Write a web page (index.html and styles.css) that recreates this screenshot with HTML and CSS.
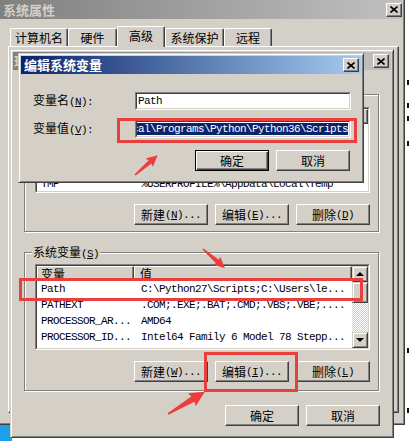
FILE: index.html
```html
<!DOCTYPE html>
<html lang="zh-CN">
<head>
    <meta charset="UTF-8">
    <meta name="viewport" content="width=device-width, initial-scale=1.0">
    <title>系统属性 - 编辑系统变量</title>
    <link rel="stylesheet" href="styles.css">
</head>
<body>
    <div class="desktop">
        <div class="desk-corner"></div>
        <div class="desk-marks"><i></i><i></i><i></i><i></i><i></i><i></i></div>

        <!-- 系统属性 -->
        <div class="window sysprop">
            <div class="caption inactive">
                <span class="caption-text">系统属性</span>
                <span class="close-btn"><svg width="8" height="7" viewBox="0 0 8 7"><path d="M0.5 0.5L7.5 6.5M7.5 0.5L0.5 6.5"/></svg></span>
            </div>
            <div class="tabs">
                <span class="tab tab-name">计算机名</span>
                <span class="tab tab-hw">硬件</span>
                <span class="tab tab-adv active">高级</span>
                <span class="tab tab-prot">系统保护</span>
                <span class="tab tab-remote">远程</span>
            </div>
            <div class="tab-panel"></div>
        </div>

        <!-- 环境变量 -->
        <div class="window envvars">
            <div class="caption inactive">
                <span class="caption-text">环境变量</span>
                <span class="close-btn"><svg width="8" height="7" viewBox="0 0 8 7"><path d="M0.5 0.5L7.5 6.5M7.5 0.5L0.5 6.5"/></svg></span>
            </div>

            <div class="group user-group">
                <span class="legend">用户变量<span class="a">(<u>U</u>)</span></span>
                <div class="lv-frame">
                    <div class="listview">
                        <div class="lv-main">
                            <div class="lv-head"><span class="col-name">变量</span><span class="col-value">值</span></div>
                            <div class="lv-rows user-rows">
                                <div class="lv-row"><span class="col-name">PATH</span><span class="col-value">%USERPROFILE%\AppData\Local\Micr...</span></div>
                                <div class="lv-row"><span class="col-name">TEMP</span><span class="col-value">%USERPROFILE%\AppData\Local\Temp</span></div>
                                <div class="lv-row"><span class="col-name">Tmp</span><span class="col-value">%USERPROFILE%\AppData\Local\Temp</span></div>
                                <div class="lv-row"><span class="col-name">TMP</span><span class="col-value">%USERPROFILE%\AppData\Local\Temp</span></div>
                            </div>
                        </div>
                    </div>
                </div>
                <div class="btn-row">
                    <button class="btn">新建<span class="a">(<u>N</u>)...</span></button>
                    <button class="btn">编辑<span class="a">(<u>E</u>)...</span></button>
                    <button class="btn">删除<span class="a">(<u>D</u>)</span></button>
                </div>
            </div>

            <div class="group sys-group">
                <span class="legend">系统变量<span class="a">(<u>S</u>)</span></span>
                <div class="lv-frame">
                    <div class="listview">
                        <div class="lv-main">
                            <div class="lv-head"><span class="col-name">变量</span><span class="col-value">值</span></div>
                            <div class="lv-rows">
                                <div class="lv-row"><span class="col-name">Path</span><span class="col-value">C:\Python27\Scripts;C:\Users\le...</span></div>
                                <div class="lv-row"><span class="col-name">PATHEXT</span><span class="col-value">.COM;.EXE;.BAT;.CMD;.VBS;.VBE;....</span></div>
                                <div class="lv-row"><span class="col-name">PROCESSOR_AR...</span><span class="col-value">AMD64</span></div>
                                <div class="lv-row"><span class="col-name">PROCESSOR_ID...</span><span class="col-value">Intel64 Family 6 Model 78 Stepp...</span></div>
                            </div>
                        </div>
                        <div class="vscroll">
                            <span class="sb-btn"><i class="arrow-up"></i></span>
                            <span class="sb-thumb"></span>
                            <span class="sb-track"></span>
                            <span class="sb-btn"><i class="arrow-down"></i></span>
                        </div>
                    </div>
                </div>
                <div class="btn-row">
                    <button class="btn">新建<span class="a">(<u>W</u>)...</span></button>
                    <button class="btn">编辑<span class="a">(<u>I</u>)...</span></button>
                    <button class="btn">删除<span class="a">(<u>L</u>)</span></button>
                </div>
            </div>

            <div class="dlg-buttons">
                <button class="btn">确定</button>
                <button class="btn">取消</button>
            </div>
        </div>

        <!-- 编辑系统变量 -->
        <div class="window editvar">
            <div class="caption active">
                <span class="caption-text">编辑系统变量</span>
                <span class="close-btn"><svg width="8" height="7" viewBox="0 0 8 7"><path d="M0.5 0.5L7.5 6.5M7.5 0.5L0.5 6.5"/></svg></span>
            </div>
            <div class="edit-body">
                <div class="field-row">
                    <span class="field-label">变量名<span class="a">(<u>N</u>):</span></span>
                    <div class="textbox"><div class="textbox-inner"><span class="tb-text">Path</span></div></div>
                </div>
                <div class="field-row">
                    <span class="field-label">变量值<span class="a">(<u>V</u>):</span></span>
                    <div class="textbox"><div class="textbox-inner scrolled"><span class="tb-text selected">cal\Programs\Python\Python36\Scripts</span></div></div>
                </div>
                <div class="edit-buttons">
                    <button class="btn default">确定</button>
                    <button class="btn">取消</button>
                </div>
            </div>
        </div>

        <!-- 标注 -->
        <svg class="marks" width="409" height="441" viewBox="0 0 409 441">
            <rect x="118.5" y="119.5" width="237" height="22"/>
            <rect x="20.5" y="279.5" width="341" height="20"/>
            <rect x="205.5" y="353.5" width="91" height="37"/>
            <polygon transform="translate(135 175) rotate(-41)" points="0,-0.8 20,-2.2 19,-5.5 30,0 19,5.5 20,2.2 0,0.8"/>
            <polygon transform="translate(203 249) rotate(41)" points="0,-0.8 19,-2.2 18,-5.5 29,0 18,5.5 19,2.2 0,0.8"/>
            <polygon transform="translate(168 414) rotate(-31)" points="0,-1 29,-3 28,-7.5 43,0 28,7.5 29,3 0,1"/>
        </svg>
    </div>
</body>
</html>
```

FILE: styles.css
```css
* {
    box-sizing: border-box;
}
body {
    margin: 0;
    background-color: #fff;
    font-family: "Noto Sans CJK SC", sans-serif;
    font-size: 12px;
    line-height: 14px;
    color: #000;
    overflow: hidden;
}
.desktop {
    position: relative;
    width: 409px;
    height: 441px;
    overflow: hidden;
}
.desk-corner {
    position: absolute;
    left: 0;
    top: 424px;
    width: 12px;
    height: 17px;
    background-color: #1ea0e6;
}
.desk-marks {
    position: absolute;
    left: 405px;
    top: 0;
    width: 4px;
    height: 441px;
}
.desk-marks i {
    position: absolute;
    left: 2px;
    width: 2px;
    height: 5px;
    background-color: #111;
}
.desk-marks i:nth-child(1) { top: 80px; }
.desk-marks i:nth-child(2) { top: 103px; }
.desk-marks i:nth-child(3) { top: 116px; }
.desk-marks i:nth-child(4) { top: 141px; }
.desk-marks i:nth-child(5) { top: 348px; }
.desk-marks i:nth-child(6) { top: 408px; }

/* classic window frame */
.window {
    position: absolute;
    display: flex;
    flex-direction: column;
    background-color: #d4d0c8;
    border: 1px solid;
    border-color: #d4d0c8 #404040 #404040 #d4d0c8;
    box-shadow: inset 1px 1px #fff, inset -1px -1px #808080;
    padding: 2px;
}
.caption {
    display: flex;
    align-items: center;
    justify-content: space-between;
    flex-shrink: 0;
    height: 18px;
    padding: 0 2px 0 3px;
    font-size: 13px;
    font-weight: bold;
    white-space: nowrap;
}
.caption.active {
    background: linear-gradient(90deg, #0a246a, #a6caf0);
    color: #fff;
}
.caption.inactive {
    background: linear-gradient(90deg, #808080, #c0c0c0);
    color: #d4d0c8;
}
.close-btn {
    display: flex;
    align-items: center;
    justify-content: center;
    width: 16px;
    height: 14px;
    background-color: #d4d0c8;
    border: 1px solid;
    border-color: #fff #404040 #404040 #fff;
    box-shadow: inset -1px -1px #808080;
}
.close-btn svg path {
    stroke: #000;
    stroke-width: 1.6;
    fill: none;
}

/* 系统属性 */
.sysprop {
    left: -3px;
    top: -3px;
    width: 408px;
    height: 428px;
}
.sysprop .caption {
    height: 19px;
    padding-right: 0;
}
.tabs {
    position: relative;
    z-index: 1;
    display: flex;
    align-items: flex-end;
    height: 20px;
    margin: 7px 0 0 10px;
}
.tab {
    height: 18px;
    border: 1px solid #fff;
    border-right-color: #404040;
    border-bottom: none;
    border-radius: 2px 2px 0 0;
    box-shadow: inset -1px 0 #808080;
    text-align: center;
    line-height: 17px;
    background-color: #d4d0c8;
}
.tab.active {
    height: 21px;
    margin-bottom: -1px;
    line-height: 18px;
}
.tab-name { width: 58px; }
.tab-hw { width: 49px; }
.tab-adv { width: 48px; }
.tab-prot { width: 59px; }
.tab-remote { width: 48px; }
.tab-panel {
    margin-left: 8px;
    width: 391px;
    height: 367px;
    border: 1px solid;
    border-color: #fff #404040 #404040 #fff;
    box-shadow: inset -1px -1px #808080;
}

/* 环境变量 */
.envvars {
    left: 10px;
    top: 49px;
    width: 384px;
    height: 389px;
}
.envvars .caption {
    padding-left: 1px;
}
.group {
    position: relative;
    display: flex;
    flex-direction: column;
    margin-left: 11px;
    width: 355px;
    border: 1px solid #808080;
    box-shadow: inset 1px 1px #fff, 1px 1px #fff;
}
.user-group {
    margin-top: 24px;
    padding: 12px 8px 6px 10px;
}
.sys-group {
    margin-top: 20px;
    padding: 11px 8px 8px 10px;
}
.legend {
    position: absolute;
    left: 7px;
    top: -8px;
    padding: 0 1px;
    background-color: #d4d0c8;
}
.a {
    font-family: "Liberation Mono", monospace;
    font-size: 11px;
    letter-spacing: -0.6px;
}
.lv-frame {
    width: 335px;
    height: 86px;
    border: 1px solid;
    border-color: #808080 #fff #fff #808080;
}
.listview {
    display: flex;
    height: 100%;
    background-color: #fff;
    border: 1px solid;
    border-color: #404040 #d4d0c8 #d4d0c8 #404040;
}
.lv-main {
    flex: 1;
    min-width: 0;
    overflow: hidden;
}
.lv-head {
    display: flex;
    height: 15px;
}
.lv-head span {
    height: 15px;
    line-height: 13px;
    background-color: #d4d0c8;
    border: 1px solid;
    border-color: #fff #404040 #404040 #fff;
    box-shadow: inset -1px -1px #808080;
}
.lv-head .col-name {
    padding-left: 3px;
}
.lv-head .col-value {
    padding-left: 5px;
}
.col-name {
    flex-shrink: 0;
    width: 97px;
    padding-left: 4px;
    white-space: nowrap;
    overflow: hidden;
}
.col-value {
    flex: 1;
    padding-left: 7px;
    white-space: nowrap;
    overflow: hidden;
}
.user-rows {
    padding-top: 4px;
}
.lv-row {
    display: flex;
    height: 16px;
    line-height: 16px;
    font-family: "Liberation Mono", monospace;
    font-size: 11px;
    letter-spacing: -0.6px;
}
.vscroll {
    display: flex;
    flex-direction: column;
    flex-shrink: 0;
    width: 16px;
    background: repeating-conic-gradient(#d4d0c8 0 25%, #fff 0 50%) 0 0 / 2px 2px;
}
.sb-btn,
.sb-thumb {
    display: flex;
    align-items: center;
    justify-content: center;
    background-color: #d4d0c8;
    border: 1px solid;
    border-color: #d4d0c8 #404040 #404040 #d4d0c8;
    box-shadow: inset 1px 1px #fff, inset -1px -1px #808080;
}
.sb-btn {
    height: 16px;
}
.sb-thumb {
    height: 21px;
}
.sb-track {
    flex: 1;
}
.arrow-up,
.arrow-down {
    width: 0;
    height: 0;
    border-left: 4px solid transparent;
    border-right: 4px solid transparent;
}
.arrow-up {
    border-bottom: 4px solid #000;
}
.arrow-down {
    border-top: 4px solid #000;
}
.btn-row {
    display: flex;
    justify-content: flex-end;
    gap: 7px;
    margin-top: 11px;
}
.btn {
    display: flex;
    align-items: center;
    justify-content: center;
    width: 74px;
    height: 21px;
    padding: 0;
    font: inherit;
    color: #000;
    background-color: #d4d0c8;
    border: 1px solid;
    border-color: #fff #404040 #404040 #fff;
    box-shadow: inset -1px -1px #808080;
}
.btn.default {
    border-color: #000;
    box-shadow: inset 1px 1px #fff, inset -1px -1px #404040, inset -2px -2px #808080;
}
.dlg-buttons {
    display: flex;
    justify-content: flex-end;
    gap: 7px;
    margin: 14px 11px 0 0;
}

/* 编辑系统变量 */
.editvar {
    z-index: 2;
    left: 18px;
    top: 53px;
    width: 346px;
    height: 130px;
}
.edit-body {
    padding: 18px 10px 0 12px;
}
.field-row {
    display: flex;
    align-items: center;
    height: 18px;
}
.field-row + .field-row {
    margin-top: 10px;
}
.field-label {
    width: 102px;
    flex-shrink: 0;
}
.textbox {
    width: 216px;
    height: 18px;
    border: 1px solid;
    border-color: #808080 #fff #fff #808080;
}
.textbox-inner {
    display: flex;
    align-items: center;
    height: 100%;
    padding: 0 1px;
    overflow: hidden;
    background-color: #fff;
    border: 1px solid;
    border-color: #404040 #d4d0c8 #d4d0c8 #404040;
}
.textbox-inner.scrolled {
    justify-content: flex-end;
}
.tb-text {
    flex-shrink: 0;
    height: 12px;
    line-height: 12px;
    white-space: nowrap;
    font-family: "Liberation Mono", monospace;
    font-size: 11px;
    letter-spacing: -0.6px;
}
.tb-text.selected {
    background-color: #0a246a;
    color: #fff;
}
.edit-buttons {
    display: flex;
    justify-content: flex-end;
    gap: 7px;
    margin-top: 12px;
    padding-right: 1px;
}

/* red annotations */
.marks {
    position: absolute;
    left: 0;
    top: 0;
    z-index: 5;
    pointer-events: none;
}
.marks rect {
    fill: none;
    stroke: #e8403f;
    stroke-width: 3;
}
.marks polygon {
    fill: #ee3b3b;
}
```
